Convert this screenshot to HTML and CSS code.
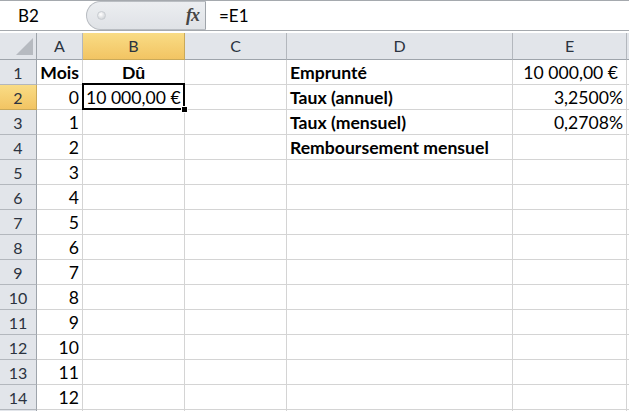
FILE: index.html
```html
<!DOCTYPE html>
<html lang="fr">
<head>
    <meta charset="UTF-8">
    <title>Emprunt</title>
    <link rel="stylesheet" href="styles.css">
</head>
<body>

<div class="formula-bar">
    <div class="name-box">B2</div>
    <div class="fx-box">
        <span class="knob"></span>
        <span class="fx">fx</span>
    </div>
    <div class="formula">=E1</div>
</div>

<div class="sheet">
    <div class="corner"><span class="tri"></span></div>
    <div class="h">A</div>
    <div class="h sel">B</div>
    <div class="h">C</div>
    <div class="h">D</div>
    <div class="h">E</div>
    <div class="h"></div>

    <div class="rh">1</div>
    <div class="c b r">Mois</div>
    <div class="c b ctr">Dû</div>
    <div class="c"></div>
    <div class="c b">Emprunté</div>
    <div class="c r acc">10 000,00 €</div>
    <div class="c"></div>

    <div class="rh sel">2</div>
    <div class="c r">0</div>
    <div class="c r active">10 000,00 €<span class="handle"></span></div>
    <div class="c"></div>
    <div class="c b">Taux (annuel)</div>
    <div class="c r">3,2500%</div>
    <div class="c"></div>

    <div class="rh">3</div>
    <div class="c r">1</div>
    <div class="c"></div>
    <div class="c"></div>
    <div class="c b">Taux (mensuel)</div>
    <div class="c r">0,2708%</div>
    <div class="c"></div>

    <div class="rh">4</div>
    <div class="c r">2</div>
    <div class="c"></div>
    <div class="c"></div>
    <div class="c b">Remboursement mensuel</div>
    <div class="c"></div>
    <div class="c"></div>

    <div class="rh">5</div>
    <div class="c r">3</div>
    <div class="c"></div><div class="c"></div><div class="c"></div><div class="c"></div><div class="c"></div>

    <div class="rh">6</div>
    <div class="c r">4</div>
    <div class="c"></div><div class="c"></div><div class="c"></div><div class="c"></div><div class="c"></div>

    <div class="rh">7</div>
    <div class="c r">5</div>
    <div class="c"></div><div class="c"></div><div class="c"></div><div class="c"></div><div class="c"></div>

    <div class="rh">8</div>
    <div class="c r">6</div>
    <div class="c"></div><div class="c"></div><div class="c"></div><div class="c"></div><div class="c"></div>

    <div class="rh">9</div>
    <div class="c r">7</div>
    <div class="c"></div><div class="c"></div><div class="c"></div><div class="c"></div><div class="c"></div>

    <div class="rh">10</div>
    <div class="c r">8</div>
    <div class="c"></div><div class="c"></div><div class="c"></div><div class="c"></div><div class="c"></div>

    <div class="rh">11</div>
    <div class="c r">9</div>
    <div class="c"></div><div class="c"></div><div class="c"></div><div class="c"></div><div class="c"></div>

    <div class="rh">12</div>
    <div class="c r">10</div>
    <div class="c"></div><div class="c"></div><div class="c"></div><div class="c"></div><div class="c"></div>

    <div class="rh">13</div>
    <div class="c r">11</div>
    <div class="c"></div><div class="c"></div><div class="c"></div><div class="c"></div><div class="c"></div>

    <div class="rh">14</div>
    <div class="c r">12</div>
    <div class="c"></div><div class="c"></div><div class="c"></div><div class="c"></div><div class="c"></div>

    <div class="rh"></div>
    <div class="c"></div>
    <div class="c"></div><div class="c"></div><div class="c"></div><div class="c"></div><div class="c"></div>
</div>

</body>
</html>
```

FILE: styles.css
```css
html, body {
    margin: 0;
    height: 100%;
    overflow: hidden;
    background: #fff;
}
body {
    font-family: Lato, "Open Sans", sans-serif;
    font-size: 17.6px;
    color: #000;
}

/* formula bar */
.formula-bar {
    display: flex;
    height: 29px;
    border-top: 1px solid #a5a9ae;
    border-bottom: 1px solid #a5a9ae;
    margin-bottom: 2px;
}
.name-box {
    width: 68px;
    padding-left: 18px;
    line-height: 30px;
    font-size: 17px;
}
.fx-box {
    display: flex;
    align-items: center;
    justify-content: space-between;
    width: 120px;
    box-sizing: border-box;
    padding: 0 6px 0 10px;
    background: linear-gradient(#eceef1, #dfe2e6);
    border: 1px solid #b9bdc2;
    border-right: 1px solid #9fa4aa;
    border-radius: 15px 0 0 15px;
}
.knob {
    width: 7px;
    height: 7px;
    border-radius: 50%;
    background: radial-gradient(circle at 40% 35%, #fff, #c4c8cd);
    border: 1px solid #c8ccd1;
}
.fx {
    font-family: "Liberation Serif", serif;
    font-style: italic;
    font-weight: bold;
    font-size: 18px;
    color: #454545;
    letter-spacing: -1px;
}
.formula {
    padding-left: 13px;
    line-height: 30px;
    font-size: 17px;
}

/* grid */
.sheet {
    display: grid;
    grid-template-columns: 37px 46px 102px 102px 226px 114px 1fr;
    grid-template-rows: 27px;
    grid-auto-rows: 25px;
}
.sheet > div {
    box-sizing: border-box;
    white-space: nowrap;
}
.corner {
    position: relative;
    background: #e2e5ea;
    border-right: 1px solid #9ea4ab;
    border-bottom: 1px solid #9ea4ab;
}
.tri {
    position: absolute;
    right: 3px;
    bottom: 4px;
    width: 0;
    height: 0;
    border-left: 17px solid transparent;
    border-bottom: 17px solid #b6bac0;
}
.h {
    background: #e2e5ea;
    border-right: 1px solid #b3b7bd;
    border-bottom: 1px solid #9ea4ab;
    text-align: center;
    line-height: 26px;
    font-size: 16px;
    color: #2b3340;
}
.rh {
    background: #e2e5ea;
    border-right: 1px solid #9ea4ab;
    border-bottom: 1px solid #b3b7bd;
    text-align: center;
    padding-top: 2px;
    line-height: 22px;
    font-size: 16px;
    color: #2b3340;
}
.h.sel, .rh.sel {
    background: linear-gradient(#f9dc85, #f2c463);
    border-color: #c9a95a;
}
.c {
    border-right: 1px solid #d4d4d4;
    border-bottom: 1px solid #d4d4d4;
    padding: 2px 3px 0;
    line-height: 22px;
}
.b { font-weight: bold; }
.r { text-align: right; }
.ctr { text-align: center; }
.acc { padding-right: 8px; }
.active {
    position: relative;
    padding-right: 4px;
}
.active::after {
    content: "";
    position: absolute;
    top: -2px;
    left: -1px;
    right: -1px;
    bottom: -1px;
    border: 2px solid #000;
}
.handle {
    position: absolute;
    right: -4px;
    bottom: -4px;
    width: 5px;
    height: 5px;
    background: #000;
    border: 1px solid #fff;
    z-index: 1;
}
```
